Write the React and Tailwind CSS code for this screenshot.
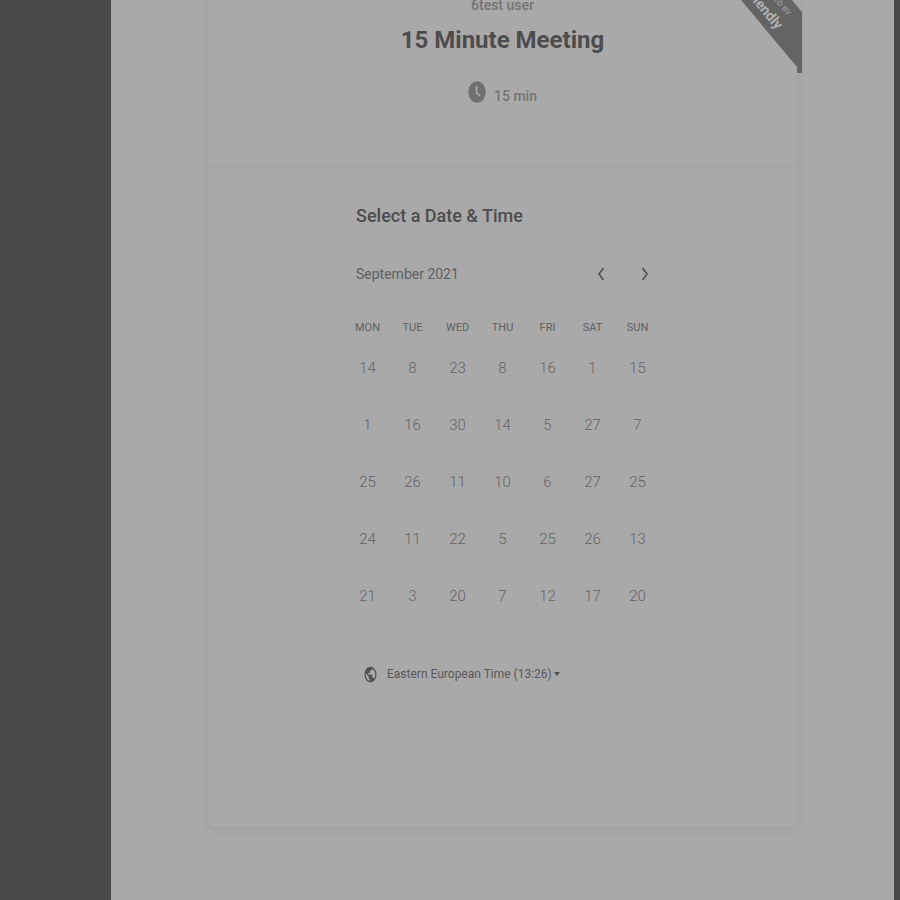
import { useState } from "react";

const weekdays = ["MON", "TUE", "WED", "THU", "FRI", "SAT", "SUN"];

const weeks = [
  [14, 8, 23, 8, 16, 1, 15],
  [1, 16, 30, 14, 5, 27, 7],
  [25, 26, 11, 10, 6, 27, 25],
  [24, 11, 22, 5, 25, 26, 13],
  [21, 3, 20, 7, 12, 17, 20],
];

function ClockIcon() {
  return (
    <svg viewBox="0 0 18 22" className="h-[22px] w-[18px]" aria-hidden="true">
      <ellipse cx="9" cy="11" rx="8.7" ry="10.8" fill="#707070" />
      <path d="M8.6 5v6.8l3.6 3.4" fill="none" stroke="#a9a9a9" strokeWidth="1.8" />
    </svg>
  );
}

function GlobeIcon() {
  return (
    <svg viewBox="0 0 24 24" preserveAspectRatio="none" className="h-[17px] w-[13px]" aria-hidden="true">
      <path
        fill="#505050"
        d="M12 1C5.9 1 1 5.900 1 12s4.900 11 11 11 11-4.900 11-11S18.100 1 12 1zm-1.200 19.700C6.500 20.200 3.200 16.500 3.200 12c0-.7.1-1.300.2-2l5.300 5.300v1.100c0 1.200 1 2.200 2.100 2.200v2.100zm7.700-2.800c-.3-.9-1.100-1.500-2.100-1.500h-1.100v-3.300c0-.6-.5-1.100-1.100-1.100H7.600V9.800h2.200c.6 0 1.100-.5 1.100-1.100V6.500h2.200c1.200 0 2.200-1 2.200-2.200v-.5c3.200 1.300 5.500 4.500 5.500 8.200 0 2.300-.9 4.400-2.300 5.900z"
      />
    </svg>
  );
}

function Chevron({ d }) {
  return (
    <svg viewBox="0 0 8 14" className="h-[14px] w-2" fill="none" stroke="#555555" strokeWidth="1.8" aria-hidden="true">
      <path d={d} />
    </svg>
  );
}

function Ribbon() {
  return (
    <div className="absolute -right-[5px] top-1 h-[73px] w-[61px] overflow-hidden font-bold">
      <svg viewBox="0 0 61 73" className="h-full w-full" aria-hidden="true">
        <path d="M0 0H51L61 12V73H56V67Z" fill="#646464" />
      </svg>
      <span className="absolute right-[13px] top-[11px] origin-right rotate-50 whitespace-nowrap text-[8px] leading-[8px] text-[#929292]">
        POWERED BY
      </span>
      <span className="absolute right-[22px] top-[20px] origin-right rotate-50 whitespace-nowrap text-[14px] leading-[14px] text-[#b0b0b0]">
        Friendly
      </span>
    </div>
  );
}

export default function App() {
  const [zone, setZone] = useState("eet");

  return (
    <div className="flex h-screen overflow-hidden bg-[#4a4a4a] font-['Roboto','Liberation_Sans',sans-serif]">
      <div className="w-[111px] shrink-0" />
      <main className="min-w-0 flex-1 bg-[#a9a9a9] px-24">
        <article className="relative -mt-1 rounded-b-lg border border-t-0 border-[#a3a3a3] pb-[141px] shadow-[0_2px_8px_rgba(0,0,0,0.06)]">
          <Ribbon />
          <header className="flex h-[172px] flex-col items-center border-b border-[#a3a3a3]">
            <p className="text-[14px] leading-[18px] font-medium text-[#747474]">6test user</p>
            <h1 className="mt-[10px] text-[24px] leading-8 font-bold text-[#4d4d4d]">15 Minute Meeting</h1>
            <div className="mt-[25px] flex items-start gap-2">
              <ClockIcon />
              <span className="mt-[3px] text-[14px] leading-6 font-medium text-[#747474]">15 min</span>
            </div>
          </header>

          <section className="mx-auto max-w-[315px] pt-9">
            <h2 className="px-[11px] text-[18px] leading-6 font-medium text-[#4d4d4d]">Select a Date &amp; Time</h2>
            <div className="mt-[34px] flex h-6 items-center pl-[11px] text-[14px] text-[#606060]">
              <span className="flex-1">September 2021</span>
              <button aria-label="Previous month" className="flex h-6 w-[44px] items-center justify-center">
                <Chevron d="M6.5 1L2 7l4.500 6" />
              </button>
              <button aria-label="Next month" className="-mr-[7px] flex h-6 w-[44px] items-center justify-center">
                <Chevron d="M1.500 1L6 7l-4.500 6" />
              </button>
            </div>
            <table className="mt-8 w-full table-fixed text-center">
              <thead>
                <tr>
                  {weekdays.map((day) => (
                    <th key={day} className="p-0 pb-[2px] text-[11px] leading-5 font-normal text-[#606060]">
                      {day}
                    </th>
                  ))}
                </tr>
              </thead>
              <tbody>
                {weeks.map((week, row) => (
                  <tr key={row}>
                    {week.map((date, col) => (
                      <td key={col} className="h-[57px] p-0">
                        <button className="h-10 w-10 text-[15px] font-light text-[#646464]">{date}</button>
                      </td>
                    ))}
                  </tr>
                ))}
              </tbody>
            </table>
            <div className="mt-[37px] flex h-6 items-center pl-[19px]">
              <GlobeIcon />
              <select
                aria-label="Time zone"
                value={zone}
                onChange={(event) => setZone(event.target.value)}
                className="ml-[10px] w-[167px] appearance-none bg-transparent text-[12px] leading-6 text-[#585858]"
              >
                <option value="eet">Eastern European Time (13:26)</option>
              </select>
              <svg viewBox="0 0 6 4" className="h-1 w-[6px]" aria-hidden="true">
                <path d="M0 0h6L3 4Z" fill="#505050" />
              </svg>
            </div>
          </section>
        </article>
      </main>
      <div className="w-[6px] shrink-0" />
    </div>
  );
}
